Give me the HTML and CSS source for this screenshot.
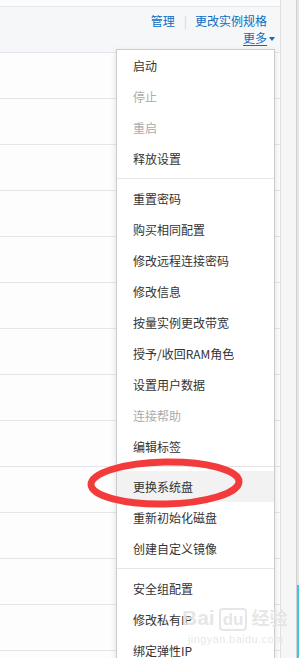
FILE: index.html
```html
<!DOCTYPE html>
<html>
<head>
  <meta charset="utf-8">
  <title>实例列表</title>
  <link rel="stylesheet" href="styles.css">
</head>
<body>
  <div class="page">
    <div class="main">
      <div class="topbar"></div>
      <div class="toolbar">
        <div class="links">
          <a class="link">管理</a>
          <span class="sep">|</span>
          <a class="link">更改实例规格</a>
        </div>
        <div class="links more-row">
          <a class="link more">更多</a>
          <span class="caret"></span>
        </div>
      </div>
      <div class="rows">
        <div class="row"></div>
        <div class="row"></div>
        <div class="row"></div>
        <div class="row"></div>
        <div class="row"></div>
        <div class="row"></div>
        <div class="row"></div>
        <div class="row"></div>
        <div class="row"></div>
        <div class="row"></div>
        <div class="row"></div>
        <div class="row"></div>
        <div class="row"></div>
        <div class="row"></div>
      </div>
    </div>
    <div class="gutter">
      <div class="gutter-inner"></div>
      <div class="gutter-edge"><div class="side-tab"></div></div>
    </div>
  </div>

  <!-- dropdown opened from 更多 -->
  <ul class="menu">
    <li class="item">启动</li>
    <li class="item disabled">停止</li>
    <li class="item disabled">重启</li>
    <li class="item">释放设置</li>
    <li class="divider"></li>
    <li class="item">重置密码</li>
    <li class="item">购买相同配置</li>
    <li class="item">修改远程连接密码</li>
    <li class="item">修改信息</li>
    <li class="item">按量实例更改带宽</li>
    <li class="item">授予/收回RAM角色</li>
    <li class="item">设置用户数据</li>
    <li class="item disabled">连接帮助</li>
    <li class="item">编辑标签</li>
    <li class="divider"></li>
    <li class="item hover">更换系统盘</li>
    <li class="item">重新初始化磁盘</li>
    <li class="item">创建自定义镜像</li>
    <li class="divider"></li>
    <li class="item">安全组配置</li>
    <li class="item">修改私有IP</li>
    <li class="item">绑定弹性IP</li>
  </ul>

  <!-- hand-drawn annotation -->
  <svg class="mark" viewBox="0 0 175 70" xmlns="http://www.w3.org/2000/svg">
    <ellipse cx="85" cy="31" rx="74" ry="21" fill="none" stroke="#f43b3b" stroke-width="7" transform="rotate(-1.2 85 31)"/>
  </svg>

  <div class="watermark">
    <div class="wm-logo"><span class="wm-bai">Bai</span><span class="wm-du">du</span><span class="wm-jy">经验</span></div>
    <div class="wm-url">jingyan.baidu.com</div>
  </div>
</body>
</html>
```

FILE: styles.css
```css
:root {
  --link: #0b6cc1;
  --text: #333333;
  --text-disabled: #ababab;
  --line: #e3e6ea;
  --header-bg: #f6f7f9;
}

* {
  margin: 0;
  padding: 0;
  box-sizing: border-box;
}

body {
  width: 299px;
  height: 658px;
  overflow: hidden;
  position: relative;
  background: #ffffff;
  font-family: "Noto Sans CJK SC", "Noto Sans", sans-serif;
  font-size: 12px;
  color: var(--text);
}

.page {
  display: flex;
  height: 658px;
}

.main {
  width: 281px;
  border-right: 1px solid #e1e1e1;
  display: flex;
  flex-direction: column;
  overflow: hidden;
}

.topbar {
  flex-shrink: 0;
  height: 7px;
  background: #fcfcfc;
  border-bottom: 1px solid var(--line);
}

.toolbar {
  flex-shrink: 0;
  height: 46px;
  padding-top: 5px;
  background: var(--header-bg);
  border-bottom: 1px solid var(--line);
  display: flex;
  flex-direction: column;
  align-items: flex-end;
}

.links {
  display: flex;
  align-items: center;
  height: 17px;
  line-height: 17px;
  padding-right: 13px;
}

.more-row {
  padding-right: 5px;
}

.link {
  color: var(--link);
  text-decoration: none;
}

.sep {
  color: #d4d7db;
  margin: 0 8px 0 9px;
}

.more {
  text-decoration: underline;
  text-underline-offset: 2px;
}

.caret {
  width: 0;
  height: 0;
  margin-left: 2px;
  margin-top: 3px;
  border-left: 3.5px solid transparent;
  border-right: 3.5px solid transparent;
  border-top: 4px solid var(--link);
}

.rows {
  flex: 1;
  min-height: 0;
  background: #fdfdfd;
}

.row {
  height: 46px;
  border-bottom: 1px solid var(--line);
}

.gutter {
  flex: 1;
  display: flex;
}

.gutter-inner {
  flex: 1;
  background: #f6f6f6;
}

.gutter-edge {
  width: 3px;
  background: #e6e6e6;
  border-left: 1px solid #d2d2d2;
  position: relative;
}

.side-tab {
  position: absolute;
  left: 0;
  right: -1px;
  top: 585px;
  bottom: 0;
  background: #3ec6dc;
}

/* dropdown */
.menu {
  position: absolute;
  left: 116px;
  top: 49px;
  width: 159px;
  list-style: none;
  background: #ffffff;
  border: 1px solid #cbcbcb;
  box-shadow: 0 2px 6px rgba(0, 0, 0, 0.12);
}

.item {
  height: 31px;
  line-height: 31px;
  padding-left: 16px;
  color: var(--text);
  white-space: nowrap;
}

.item.disabled {
  color: var(--text-disabled);
}

.item.hover {
  background: #f2f2f2;
}

.divider {
  height: 1px;
  margin: 4px 0;
  background: #e6e6e6;
}

.mark {
  position: absolute;
  left: 80px;
  top: 452px;
  width: 175px;
  height: 70px;
}

.watermark {
  position: absolute;
  left: 182px;
  top: 604px;
  color: rgba(200, 200, 200, 0.45);
  text-shadow: 0 0 1px rgba(255, 255, 255, 0.8);
  pointer-events: none;
}

.wm-logo {
  display: flex;
  align-items: baseline;
  font-family: "Liberation Sans", sans-serif;
  font-weight: bold;
  font-size: 21px;
  line-height: 26px;
}

.wm-du {
  margin-left: 4px;
  padding: 0 2px;
  border: 2px solid rgba(200, 200, 200, 0.45);
  border-radius: 4px;
  font-size: 17px;
  line-height: 19px;
}

.wm-jy {
  margin-left: 4px;
  font-family: "Noto Sans CJK SC", sans-serif;
  font-size: 18px;
}

.wm-url {
  font-family: "Liberation Sans", sans-serif;
  font-size: 11px;
  letter-spacing: 0.4px;
  margin-top: 2px;
  padding-left: 6px;
}
```
